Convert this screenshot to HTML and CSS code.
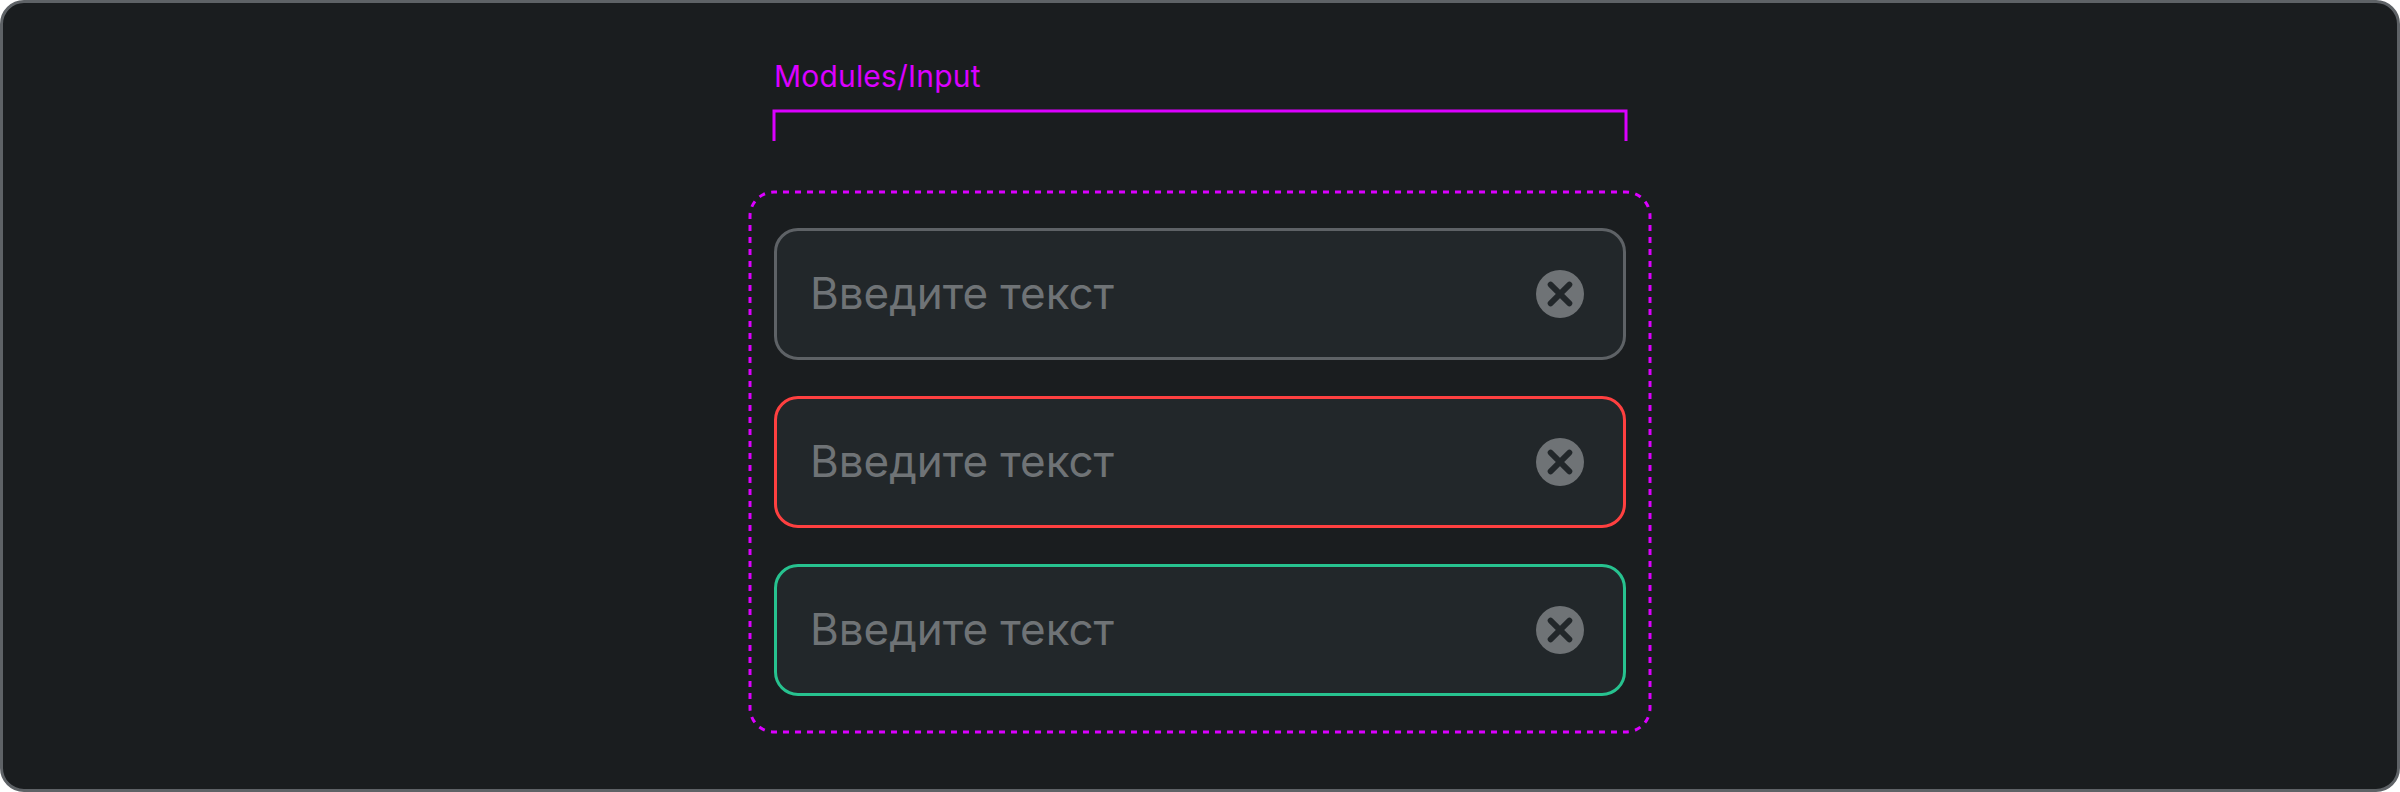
FILE: index.html
```html
<!DOCTYPE html>
<html lang="ru">
<head>
<meta charset="utf-8">
<title>Modules/Input</title>
<link rel="stylesheet" href="styles.css">
</head>
<body>
<main class="board">
  <section class="module">
    <h1 class="module-title">Modules/Input</h1>
    <svg class="bracket" width="856" height="34" viewBox="0 0 856 34"><path d="M2 32V2H854V32"/></svg>
    <div class="group">
      <svg class="outline" width="904" height="544" viewBox="-2 -2 904 544">
        <path class="edges" d="M24 0H876M900 24V516M876 540H24M0 516V24"/>
        <path class="corners" d="M0 24A24 24 0 0 1 24 0M876 0A24 24 0 0 1 900 24M900 516A24 24 0 0 1 876 540M24 540A24 24 0 0 1 0 516"/>
      </svg>
      <div class="field">
        <span class="placeholder">Введите текст</span>
        <svg class="clear" viewBox="0 0 48 48"><circle cx="24" cy="24" r="24"/><path d="M14.6 14.6l18.8 18.8M33.4 14.6L14.6 33.4"/></svg>
      </div>
      <div class="field error">
        <span class="placeholder">Введите текст</span>
        <svg class="clear" viewBox="0 0 48 48"><circle cx="24" cy="24" r="24"/><path d="M14.6 14.6l18.8 18.8M33.4 14.6L14.6 33.4"/></svg>
      </div>
      <div class="field success">
        <span class="placeholder">Введите текст</span>
        <svg class="clear" viewBox="0 0 48 48"><circle cx="24" cy="24" r="24"/><path d="M14.6 14.6l18.8 18.8M33.4 14.6L14.6 33.4"/></svg>
      </div>
    </div>
  </section>
</main>
</body>
</html>
```
FILE: styles.css
```css
* { box-sizing: border-box; }
body { margin: 0; background: #fff; font-family: Inter, "Liberation Sans", sans-serif; }
.board {
  display: flex;
  justify-content: center;
  height: 792px;
  padding-top: 55px;
  border: 3px solid #5e6266;
  border-radius: 24px;
  background: #1a1d1f;
}
.module { display: flex; flex-direction: column; width: 900px; }
.module-title {
  margin: 0 0 15px 24px;
  font-size: 30px;
  line-height: 36px;
  font-weight: 400;
  letter-spacing: 0.18px;
  color: #db00ff;
}
.bracket { display: block; flex: none; margin-left: 22px; fill: none; stroke: #db00ff; stroke-width: 3; }
.group {
  position: relative;
  display: flex;
  flex: none;
  flex-direction: column;
  gap: 36px;
  margin-top: 49px;
  padding: 36px 24px;
}
.outline { position: absolute; top: -2px; left: -2px; fill: none; stroke: #db00ff; stroke-width: 3; }
.edges { stroke-dasharray: 6 6; stroke-dashoffset: 3; }
.corners { stroke-dasharray: 6.283 6.283; stroke-dashoffset: 3.142; }
.field {
  display: flex;
  align-items: center;
  justify-content: space-between;
  height: 132px;
  padding: 0 39px 0 33px;
  border: 3px solid #5e6266;
  border-radius: 24px;
  background: #22272a;
}
.error { border-color: #ff4040; }
.success { border-color: #27c28f; }
.placeholder { padding-bottom: 2px; font-size: 44px; line-height: 60px; letter-spacing: -0.05px; color: #6f7376; }
.clear { width: 48px; height: 48px; }
.clear circle { fill: #6f7376; }
.clear path { fill: none; stroke: #22272a; stroke-width: 5.8; stroke-linecap: round; }
```
